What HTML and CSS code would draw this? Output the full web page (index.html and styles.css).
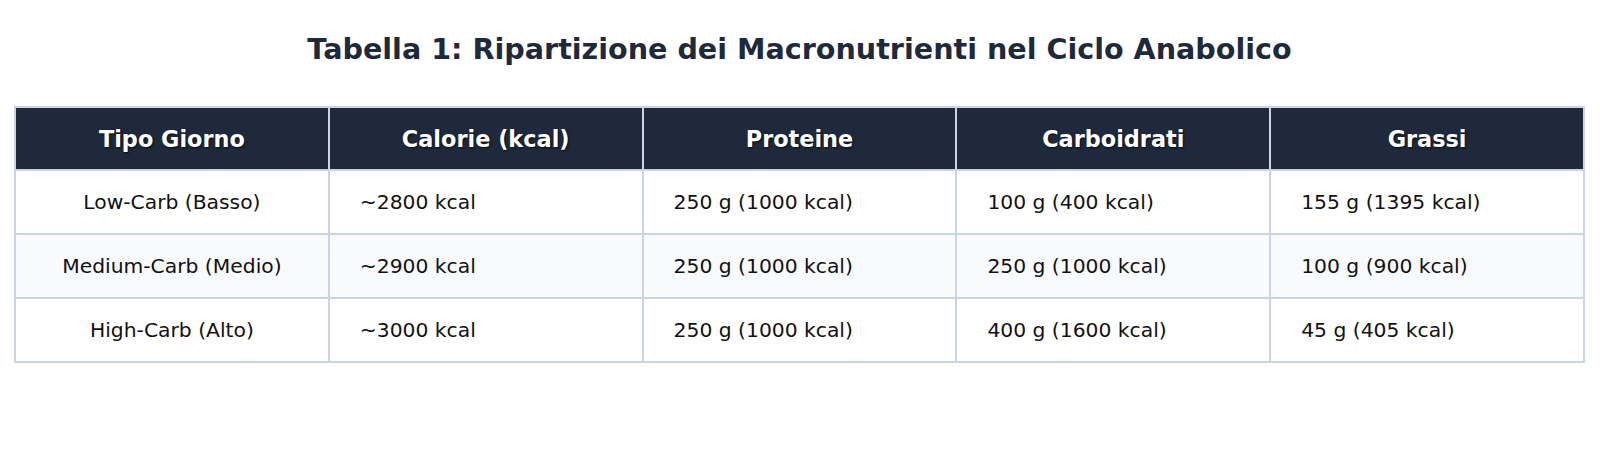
FILE: index.html
```html
<!DOCTYPE html>
<html lang="it">
<head>
<meta charset="utf-8">
<title>Tabella 1</title>
<link rel="stylesheet" href="styles.css">
</head>
<body>
<div class="page">
  <h1 class="title">Tabella 1: Ripartizione dei Macronutrienti nel Ciclo Anabolico</h1>
  <table class="macro">
    <thead>
      <tr>
        <th>Tipo Giorno</th>
        <th>Calorie (kcal)</th>
        <th>Proteine</th>
        <th>Carboidrati</th>
        <th>Grassi</th>
      </tr>
    </thead>
    <tbody>
      <tr>
        <td class="day">Low-Carb (Basso)</td>
        <td>~2800 kcal</td>
        <td>250 g (1000 kcal)</td>
        <td>100 g (400 kcal)</td>
        <td>155 g (1395 kcal)</td>
      </tr>
      <tr class="alt">
        <td class="day">Medium-Carb (Medio)</td>
        <td>~2900 kcal</td>
        <td>250 g (1000 kcal)</td>
        <td>250 g (1000 kcal)</td>
        <td>100 g (900 kcal)</td>
      </tr>
      <tr>
        <td class="day">High-Carb (Alto)</td>
        <td>~3000 kcal</td>
        <td>250 g (1000 kcal)</td>
        <td>400 g (1600 kcal)</td>
        <td>45 g (405 kcal)</td>
      </tr>
    </tbody>
  </table>
</div>
</body>
</html>
```
FILE: styles.css
```css
html, body {
  margin: 0;
  padding: 0;
  background: #ffffff;
}
body {
  font-family: "DejaVu Sans", sans-serif;
  color: #111111;
}
.page {
  padding: 31px 15px 0 14px;
}
.title {
  margin: 0;
  text-align: center;
  font-size: 28.6px;
  font-weight: bold;
  color: #1e293b;
  line-height: 36px;
}
.macro {
  margin-top: 39px;
  width: 100%;
  border-collapse: collapse;
  table-layout: fixed;
}
.macro th,
.macro td {
  border: 2px solid #cbd5e1;
  padding: 0 30px;
}
.macro th {
  background: #1e293b;
  color: #ffffff;
  font-size: 22.4px;
  font-weight: bold;
  text-align: center;
  text-shadow: 1px 1px 2px rgba(0, 0, 0, 0.7);
  height: 61.3px;
}
.macro td {
  font-size: 20.3px;
  text-align: left;
  height: 62px;
}
.macro td.day {
  text-align: center;
}
.macro tr.alt td {
  background: #f8fafc;
}
```
